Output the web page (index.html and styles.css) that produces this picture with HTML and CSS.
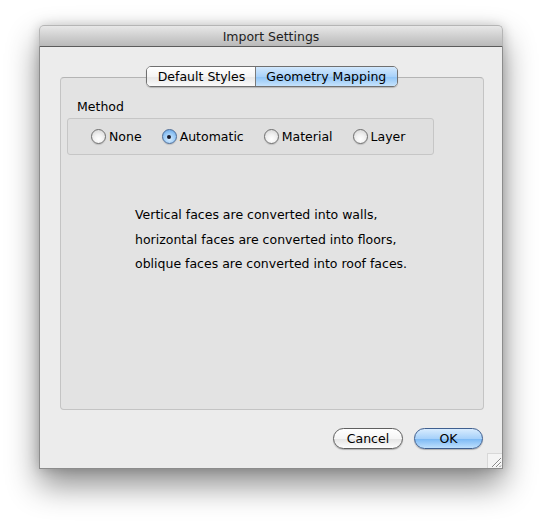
FILE: index.html
```html
<!DOCTYPE html>
<html>
<head>
<meta charset="utf-8">
<link rel="stylesheet" href="styles.css">
</head>
<body>
<div class="window">
  <div class="titlebar">Import Settings</div>
  <div class="content">
    <div class="tabs">
      <div class="tab">Default Styles</div>
      <div class="tab active">Geometry Mapping</div>
    </div>
    <div class="tabbox">
      <div class="label">Method</div>
      <div class="group">
        <div class="radio"><span class="circle"></span>None</div>
        <div class="radio"><span class="circle on"><span class="dot"></span></span>Automatic</div>
        <div class="radio"><span class="circle"></span>Material</div>
        <div class="radio"><span class="circle"></span>Layer</div>
      </div>
      <p class="desc">Vertical faces are converted into walls,<br>horizontal faces are converted into floors,<br>oblique faces are converted into roof faces.</p>
    </div>
    <div class="buttons">
      <div class="btn">Cancel</div>
      <div class="btn ok">OK</div>
    </div>
    <div class="grip">
      <svg width="14" height="14" viewBox="0 0 14 14"><path d="M4 13 L13 4 M8 13 L13 8 M11.5 13 L13 11.5" stroke="#8a8a8a" stroke-width="1" fill="none"/><path d="M5 13 L13 5 M9 13 L13 9" stroke="#fff" stroke-width="1" fill="none"/></svg>
    </div>
  </div>
</div>
</body>
</html>
```

FILE: styles.css
```css
html, body {
  margin: 0;
  padding: 0;
  background: #ffffff;
}
body {
  padding: 25px 0 0 39px;
  min-height: 524px;
  box-sizing: border-box;
  font-family: "DejaVu Sans", "Liberation Sans", sans-serif;
  font-size: 12px;
  color: #000;
}
.window {
  width: 464px;
  height: 444px;
  display: flex;
  flex-direction: column;
  box-shadow: 0 16px 32px rgba(0,0,0,0.45), 0 0 12px rgba(0,0,0,0.18);
  border-radius: 5px 5px 0 0;
}
.titlebar {
  line-height: 22px;
  text-align: center;
  font-size: 12.5px;
  color: #1e1e1e;
  background: linear-gradient(#e8e8e8, #d2d2d2 45%, #b9b9b9 100%);
  border: 1px solid #b5b5b5;
  border-bottom: 1px solid #5b5b5b;
  border-radius: 5px 5px 0 0;
  box-sizing: content-box;
  height: 20px;
}
.content {
  flex: 1;
  position: relative;
  background: #ececec;
  border: 1px solid #8c8c8c;
  border-top: none;
  padding-top: 19px;
  display: flex;
  flex-direction: column;
}
.tabs {
  align-self: center;
  margin-left: 2px;
  display: flex;
  height: 19px;
  border: 1px solid #707070;
  border-radius: 5px;
  overflow: hidden;
  margin-bottom: -10px;
  position: relative;
  z-index: 1;
  box-shadow: 0 1px 1px rgba(0,0,0,0.2);
}
.tab {
  line-height: 19px;
  padding: 0 10px 0 11px;
  background: linear-gradient(#ffffff, #f4f4f4 50%, #e6e6e6 51%, #fafafa);
  font-size: 12.5px;
}
.tab + .tab {
  border-left: 1px solid #7a7a7a;
}
.tab.active {
  padding: 0 11px 0 10px;
  background: linear-gradient(#d2e8fd, #a9d2fa 50%, #8ec3f6 51%, #c6e3fc);
}
.tabbox {
  margin-left: 20px;
  background: #e3e3e3;
  border: 1px solid #c4c4c4;
  border-top-color: #b4b4b4;
  border-radius: 4px;
  padding: 21px 0 0 0;
  box-sizing: border-box;
  height: 333px;
  width: 424px;
}
.label {
  margin-left: 16px;
  font-size: 12.5px;
  line-height: 16px;
}
.group {
  margin: 3px 0 0 6px;
  height: 35px;
  border: 1px solid #c6c6c6;
  border-radius: 3px;
  background: #dfdfdf;
  display: flex;
  align-items: center;
  padding-left: 23px;
  box-sizing: content-box;
  width: 342px;
}
.radio {
  display: flex;
  align-items: center;
  font-size: 12.5px;
}
.radio:nth-child(1) { margin-right: 20px; }
.radio:nth-child(2) { margin-right: 20px; }
.radio:nth-child(3) { margin-right: 20px; }
.circle {
  width: 13px;
  height: 13px;
  border-radius: 50%;
  border: 1px solid #6f6f6f;
  background: radial-gradient(circle at 50% 70%, #ffffff 0%, #f2f2f2 40%, #d0d0d0 100%);
  margin-right: 3px;
  display: flex;
  align-items: center;
  justify-content: center;
  box-shadow: 0 1px 1px rgba(0,0,0,0.15);
}
.circle.on {
  border-color: #4c6c97;
  background: radial-gradient(circle at 50% 70%, #d6ecff 0%, #9ccbf6 50%, #5d9ee2 100%);
}
.dot {
  width: 4px;
  height: 4px;
  border-radius: 50%;
  background: #1a1a2a;
}
.desc {
  margin: 48px 0 0 74px;
  font-size: 12.5px;
  line-height: 24.5px;
}
.buttons {
  display: flex;
  justify-content: flex-end;
  margin-top: 18px;
  padding-right: 19px;
  gap: 11px;
}
.btn {
  width: 68px;
  height: 19px;
  line-height: 19px;
  text-align: center;
  border: 1px solid #5f5f5f;
  border-radius: 11px;
  font-size: 12.5px;
  background: linear-gradient(#ffffff, #f5f5f5 50%, #e4e4e4 52%, #fdfdfd);
  box-shadow: 0 1px 1px rgba(0,0,0,0.25);
}
.btn.ok {
  width: 67px;
  border-color: #3f5f8f;
  background: linear-gradient(#d8ecfe, #a7d1fa 50%, #7ab8f4 52%, #bfe0fd);
}
.grip {
  position: absolute;
  right: 0;
  bottom: 0;
  width: 14px;
  height: 14px;
  background: #f4f4f4;
  border-left: 1px solid #d8d8d8;
  border-top: 1px solid #d8d8d8;
  line-height: 0;
}
```
